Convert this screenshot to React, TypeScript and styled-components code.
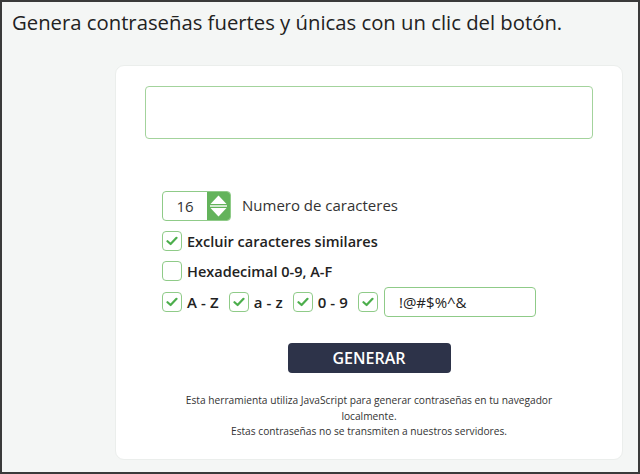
import styled, { createGlobalStyle } from "styled-components";

const GlobalStyle = createGlobalStyle`
  html, body {
    margin: 0;
    padding: 0;
  }
  body {
    font-family: "Open Sans", "Noto Sans", sans-serif;
    color: #222;
  }
`;

const green = "#63b35b";
const lightGreen = "#8fcb88";

function CheckBox({ checked }: { checked?: boolean }) {
  return (
    <Box $checked={checked}>
      {checked && (
        <svg width="12" height="10" viewBox="0 0 12 10">
          <path
            d="M1.5 5.2 L4.6 8 L10.5 1.8"
            fill="none"
            stroke="#4cae4c"
            strokeWidth="2.2"
            strokeLinecap="round"
            strokeLinejoin="round"
          />
        </svg>
      )}
    </Box>
  );
}

function App() {
  return (
    <>
      <GlobalStyle />
      <Frame>
        <Title>Genera contraseñas fuertes y únicas con un clic del botón.</Title>
        <Card>
          <Output readOnly />
          <Options>
            <LengthRow>
              <NumberField>
                <NumberValue>16</NumberValue>
                <Spinner>
                  <svg width="23" height="30" viewBox="0 0 23 30">
                    <path d="M3.5 13 L11.5 4.5 L19.5 13 Z" fill="#fff" />
                    <rect x="3" y="14.3" width="17" height="1.4" fill="#fff" />
                    <path d="M3.5 17 L11.5 25.5 L19.5 17 Z" fill="#fff" />
                  </svg>
                </Spinner>
              </NumberField>
              <LengthLabel>Numero de caracteres</LengthLabel>
            </LengthRow>
            <CheckRow>
              <CheckBox checked />
              <BoldLabel>Excluir caracteres similares</BoldLabel>
            </CheckRow>
            <CheckRow>
              <CheckBox />
              <BoldLabel>Hexadecimal 0-9, A-F</BoldLabel>
            </CheckRow>
            <SetsRow>
              <SetItem>
                <CheckBox checked />
                <SetLabel>A - Z</SetLabel>
              </SetItem>
              <SetItem>
                <CheckBox checked />
                <SetLabel>a - z</SetLabel>
              </SetItem>
              <SetItem>
                <CheckBox checked />
                <SetLabel>0 - 9</SetLabel>
              </SetItem>
              <SetItem>
                <CheckBox checked />
                <Symbols defaultValue="!@#$%^&" />
              </SetItem>
            </SetsRow>
          </Options>
          <GenerateButton>GENERAR</GenerateButton>
          <Note>
            Esta herramienta utiliza JavaScript para generar contraseñas en tu navegador
            localmente.
            <br />
            Estas contraseñas no se transmiten a nuestros servidores.
          </Note>
        </Card>
      </Frame>
    </>
  );
}

export default App;

const Frame = styled.div`
  box-sizing: border-box;
  width: 640px;
  height: 474px;
  border: 2px solid #3a3a3a;
  background: #f4f6f5;
  display: flex;
  flex-direction: column;
  overflow: hidden;
`;

const Title = styled.h1`
  margin: 7px 0 0 10px;
  font-size: 20.3px;
  line-height: 26px;
  font-weight: 400;
  color: #222;
  white-space: nowrap;
`;

const Card = styled.div`
  box-sizing: border-box;
  margin: 30px 0 0 113px;
  width: 508px;
  height: 395px;
  background: #fff;
  border: 1px solid #ebeeec;
  border-radius: 9px;
  padding: 20px 29px 0;
  display: flex;
  flex-direction: column;
`;

const Output = styled.input`
  box-sizing: border-box;
  width: 100%;
  height: 53px;
  border: 1.5px solid #a3d39c;
  border-radius: 4px;
  outline: none;
  background: #fff;
`;

const Options = styled.div`
  margin-top: 52px;
  padding-left: 17px;
  display: flex;
  flex-direction: column;
`;

const LengthRow = styled.div`
  display: flex;
  align-items: center;
  height: 30px;
`;

const NumberField = styled.div`
  display: flex;
  height: 30px;
  border: 1.5px solid ${lightGreen};
  border-radius: 4px;
  overflow: hidden;
  box-sizing: border-box;
`;

const NumberValue = styled.div`
  width: 44px;
  display: flex;
  align-items: center;
  justify-content: center;
  font-size: 15px;
  color: #333;
`;

const Spinner = styled.div`
  width: 23px;
  background: ${green};
  display: flex;
  align-items: center;
  justify-content: center;
`;

const LengthLabel = styled.span`
  margin-left: 11px;
  margin-bottom: 3px;
  font-size: 15px;
  color: #333;
`;

const CheckRow = styled.div`
  display: flex;
  align-items: center;
  gap: 5px;
  margin-top: 10px;
  height: 20px;
`;

const Box = styled.span<{ $checked?: boolean }>`
  box-sizing: border-box;
  width: 20px;
  height: 20px;
  flex: none;
  border: 1.5px solid ${lightGreen};
  border-radius: 4px;
  background: #fff;
  display: flex;
  align-items: center;
  justify-content: center;
`;

const BoldLabel = styled.span`
  font-size: 14.5px;
  font-weight: 600;
  color: #222;
  white-space: nowrap;
`;

const SetLabel = styled(BoldLabel)`
  font-size: 15px;
  letter-spacing: 0.1px;
`;

const SetsRow = styled.div`
  display: flex;
  align-items: center;
  gap: 10px;
  margin-top: 6px;
`;

const SetItem = styled.div`
  display: flex;
  align-items: center;
  gap: 5px;
`;

const Symbols = styled.input`
  box-sizing: border-box;
  width: 152px;
  height: 30px;
  margin-left: 1px;
  border: 1.5px solid ${lightGreen};
  border-radius: 4px;
  padding: 0 0 0 14px;
  font-family: "Open Sans", "Noto Sans", sans-serif;
  font-size: 15px;
  color: #222;
  outline: none;
`;

const GenerateButton = styled.button`
  align-self: center;
  margin-top: 26px;
  width: 163px;
  height: 30px;
  border: none;
  border-radius: 4px;
  background: #2d3349;
  color: #fff;
  font-family: "Open Sans", "Noto Sans", sans-serif;
  font-size: 16px;
  font-weight: 600;
  cursor: pointer;
`;

const Note = styled.p`
  align-self: center;
  max-width: 395px;
  margin: 20px 0 0;
  text-align: center;
  font-size: 10.2px;
  line-height: 15.5px;
  color: #333;
`;
